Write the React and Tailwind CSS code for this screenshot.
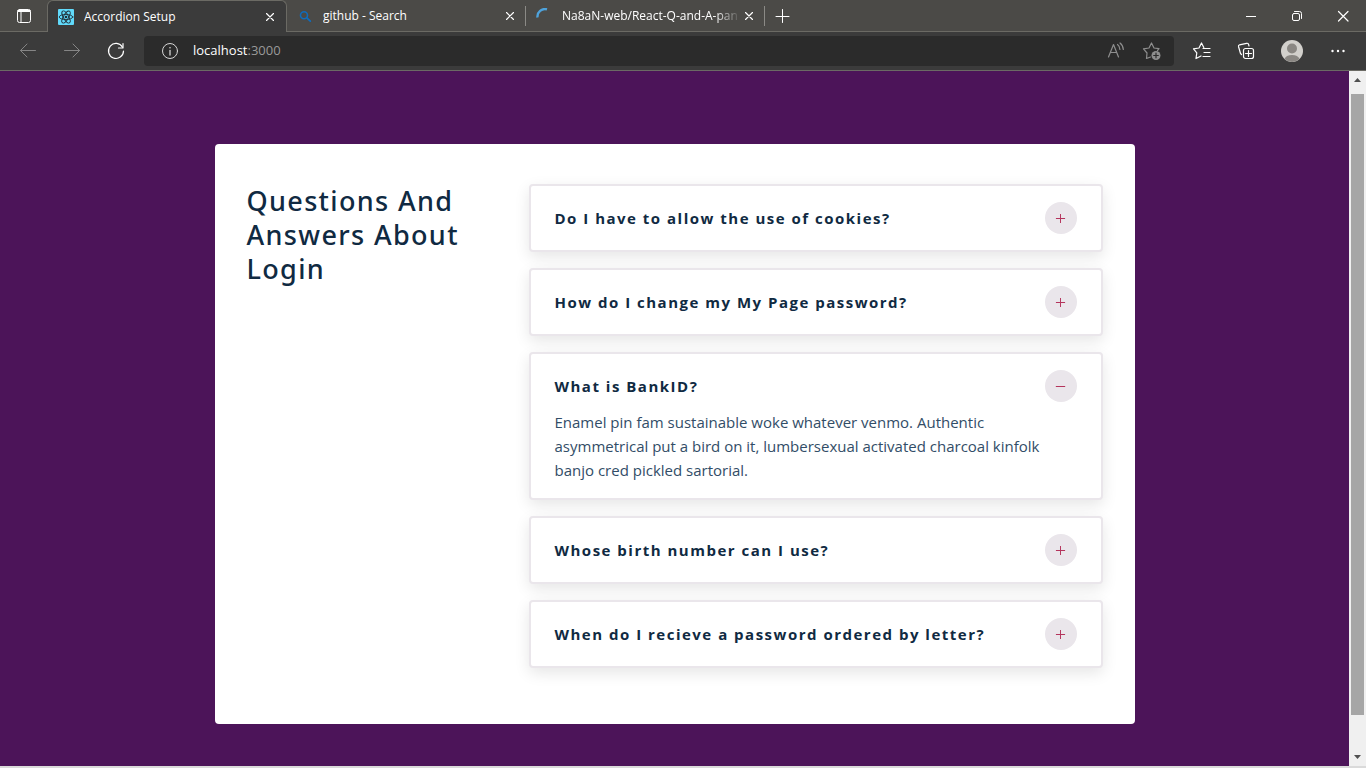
import { useState } from 'react';
import { AiOutlineMinus, AiOutlinePlus } from 'react-icons/ai';

const questions = [
  'Do I have to allow the use of cookies?',
  'How do I change my My Page password?',
  'What is BankID?',
  'Whose birth number can I use?',
  'When do I recieve a password ordered by letter?',
];

const answer =
  'Enamel pin fam sustainable woke whatever venmo. Authentic asymmetrical put a bird on it, lumbersexual activated charcoal kinfolk banjo cred pickled sartorial.';

function Icon({ size = 16, className = '', children }) {
  return (
    <svg
      width={size}
      height={size}
      viewBox={`0 0 ${size} ${size}`}
      fill="none"
      stroke="currentColor"
      strokeLinecap="round"
      strokeLinejoin="round"
      className={`shrink-0 ${className}`}
      aria-hidden="true"
    >
      {children}
    </svg>
  );
}

function CloseIcon() {
  return (
    <Icon size={8}>
      <path d="M.5.5l7 7M7.5.5l-7 7" strokeWidth="1.2" />
    </Icon>
  );
}

function ReactFavicon() {
  return (
    <Icon>
      <rect width="16" height="16" rx="1" fill="#61dafb" stroke="none" />
      <g stroke="#20303a" strokeWidth=".9">
        <ellipse cx="8" cy="8" rx="6.8" ry="2.6" />
        <ellipse cx="8" cy="8" rx="6.8" ry="2.6" transform="rotate(60 8 8)" />
        <ellipse cx="8" cy="8" rx="6.8" ry="2.6" transform="rotate(120 8 8)" />
      </g>
      <circle cx="8" cy="8" r="1.3" fill="#20303a" stroke="none" />
    </Icon>
  );
}

function SearchFavicon() {
  return (
    <Icon className="text-[#0f6cbd]">
      <circle cx="7" cy="7.2" r="3.500" strokeWidth="1.600" />
      <path d="M9.800 9.800l3.500 3.400" strokeWidth="1.700" />
    </Icon>
  );
}

function LoadingFavicon() {
  return (
    <Icon className="text-[#4ea3dc]">
      <path d="M1.500 9.500A7.500 7.500 0 0 1 11 1.400" strokeWidth="2.400" strokeLinecap="butt" />
    </Icon>
  );
}

function Tab({ icon, title, active, fade }) {
  return (
    <div
      className={
        active
          ? 'flex w-60 items-center rounded-t-md border-x border-t border-[#6b6a64] bg-[#3b3b3b] pr-3 pl-[10px]'
          : 'flex w-[239px] items-center border-t border-b border-t-transparent border-b-[#6b6a64] pl-[10px]'
      }
    >
      {icon}
      <a
        href="#tab"
        className={`ml-[10px] min-w-0 flex-1 overflow-hidden whitespace-nowrap ${
          fade ? '[mask-image:linear-gradient(to_right,black_85%,transparent)]' : ''
        }`}
      >
        {title}
      </a>
      <button
        type="button"
        aria-label={`Close ${title}`}
        className={`ml-1 flex items-center ${active ? '' : 'mr-[11px]'}`}
      >
        <CloseIcon />
      </button>
      {!active && <span className="h-5 w-px bg-[#8b8a86]" />}
    </div>
  );
}

function BarButton({ label, className = 'w-11', children }) {
  return (
    <button type="button" aria-label={label} className={`flex shrink-0 items-center justify-center ${className}`}>
      {children}
    </button>
  );
}

function TitleBar() {
  return (
    <div className="flex h-8 bg-[#4b4a47] text-xs text-white">
      <BarButton label="Tab actions" className="w-[47px] border-b border-[#6b6a64]">
        <Icon>
          <rect x="1.500" y="1.500" width="13" height="13" rx="2" />
          <path d="M2 3.500h12M2 2.500h12" />
          <path d="M5 4v10" />
        </Icon>
      </BarButton>
      <Tab active icon={<ReactFavicon />} title="Accordion Setup" />
      <Tab icon={<SearchFavicon />} title="github - Search" />
      <Tab icon={<LoadingFavicon />} title="Na8aN-web/React-Q-and-A-pan" fade />
      <div className="flex flex-1 border-b border-[#6b6a64]">
        <BarButton label="New tab" className="w-[34px]">
          <Icon>
            <path d="M8.500 1.500v13M2 8.500h13" />
          </Icon>
        </BarButton>
        <div className="ml-auto flex">
          <BarButton label="Minimize" className="w-[46px]">
            <Icon>
              <path d="M3 8.500h10" strokeLinecap="butt" />
            </Icon>
          </BarButton>
          <BarButton label="Restore" className="w-[46px]">
            <Icon>
              <rect x="3.500" y="5.500" width="7" height="7" rx="1.500" />
              <path d="M5.500 3.500h5a2 2 0 0 1 2 2v5" />
            </Icon>
          </BarButton>
          <BarButton label="Close" className="w-[46px]">
            <Icon>
              <path d="M3.500 3.500l9.500 9.500M13 3.500L3.500 13" strokeWidth="1.2" />
            </Icon>
          </BarButton>
        </div>
      </div>
    </div>
  );
}

function Toolbar() {
  return (
    <div className="flex h-[39px] border-b border-[#6b6a64] bg-[#3b3b3b] px-[6px] text-white">
      <BarButton label="Back">
        <Icon size={20} className="text-[#858585]">
          <path d="M2.500 9.500h15M9 3L2.500 9.500L9 16" />
        </Icon>
      </BarButton>
      <BarButton label="Forward">
        <Icon size={20} className="text-[#858585]">
          <path d="M2.500 9.500h15M11 3l6.500 6.500L11 16" />
        </Icon>
      </BarButton>
      <BarButton label="Refresh">
        <Icon size={20}>
          <path d="M16.500 6.200A7.500 7.500 0 1 0 17.500 10" strokeWidth="1.200" />
          <path d="M17 2.500v4.500h-4.500" strokeWidth="1.200" />
        </Icon>
      </BarButton>
      <div className="mx-[6px] my-1 flex min-w-0 flex-1 items-center rounded bg-[#2b2b2b] px-4">
        <Icon size={20} className="text-[#d6d6d6]">
          <circle cx="10" cy="10" r="7.500" />
          <path d="M10 9.500v4.500" strokeWidth="1.300" />
          <circle cx="10" cy="6.800" r=".8" fill="currentColor" stroke="none" />
        </Icon>
        <a href="#address" className="ml-[13px] flex-1 text-[13px]">
          localhost<span className="text-[#9a9a9a]">:3000</span>
        </a>
        <button type="button" aria-label="Read aloud" className="mr-4 text-[#8e8e8e]">
          <Icon size={20}>
            <path d="M2.500 16L7.500 3.500L12.500 16M4.300 11.500h6.400" strokeWidth="1.200" />
            <path d="M11.500 3.500q2.200 1.500 2.400 5M14 2q3 2.200 3.300 6.500" strokeWidth="1.200" />
          </Icon>
        </button>
        <button type="button" aria-label="Add to favorites" className="-mr-1 text-[#8e8e8e]">
          <Icon size={20}>
            <path d="M8.500 16L4.500 17.500L5 12L1.500 7.800L7 7L9.500 2L12 7l5 .7L15.500 9.500" strokeWidth="1.200" />
            <circle cx="14" cy="14.500" r="4.500" fill="currentColor" stroke="none" />
            <path d="M14 12.200v4.600M11.700 14.500h4.600" stroke="#2b2b2b" strokeWidth="1.200" />
          </Icon>
        </button>
      </div>
      <BarButton label="Favorites">
        <Icon size={20}>
          <path d="M9 15l-5 2.500.8-5.700L1.500 7.800l5.500-.8L9.500 2l2.300 4.500" strokeWidth="1.200" />
          <path d="M11 7.500h7M12 11.500h6M11 15.500h7" strokeWidth="1.200" />
        </Icon>
      </BarButton>
      <BarButton label="Collections">
        <Icon size={20}>
          <rect x="7.500" y="7.500" width="10" height="10" rx="2" strokeWidth="1.200" />
          <path d="M12.500 9.500v6M9.500 12.500h6" strokeWidth="1.200" />
          <path d="M5.500 13.500L4.500 12.500L2.500 5.500Q2.200 4.200 3.500 3.800L10.500 2.300q1.500-.3 2 .9l.5 1.800" strokeWidth="1.200" />
        </Icon>
      </BarButton>
      <BarButton label="Profile" className="w-12">
        <Icon size={22}>
          <circle cx="11" cy="11" r="11" fill="#d2d0cc" stroke="none" />
          <circle cx="11" cy="8.500" r="5" fill="#8a8783" stroke="none" />
          <path d="M3.500 19Q5 15 11 15t7.500 4Q15 22 11 22T3.500 19Z" fill="#8a8783" stroke="none" />
        </Icon>
      </BarButton>
      <BarButton label="Settings and more">
        <Icon size={20}>
          <g fill="currentColor" stroke="none">
            <circle cx="4.500" cy="10" r="1.200" />
            <circle cx="10" cy="10" r="1.200" />
            <circle cx="15.500" cy="10" r="1.200" />
          </g>
        </Icon>
      </BarButton>
    </div>
  );
}

function Question({ title, open, onToggle }) {
  return (
    <article className="rounded border-2 border-[#eae6eb] bg-white px-6 py-4 shadow-[0_5px_15px_rgba(0,0,0,0.1)]">
      <header className="flex items-center justify-between">
        <h4 className="text-[15px] leading-5 font-bold tracking-widest">{title}</h4>
        <button
          type="button"
          aria-label={`${open ? 'Hide' : 'Show'} answer: ${title}`}
          aria-expanded={open}
          onClick={onToggle}
          className="ml-4 flex size-8 shrink-0 items-center justify-center rounded-full bg-[#eae6eb] text-[#b4345c]"
        >
          {open ? <AiOutlineMinus size={13} /> : <AiOutlinePlus size={13} />}
        </button>
      </header>
      {open && <p className="mt-2 text-[15px] leading-6 text-[#324d67]">{answer}</p>}
    </article>
  );
}

function Scrollbar() {
  return (
    <div className="flex w-[17px] shrink-0 flex-col items-center bg-[#f0f0f0] text-[#505050]" aria-hidden="true">
      <svg width="17" height="23" viewBox="0 0 17 23" fill="currentColor">
        <path d="M5 11h7L8.500 7z" />
      </svg>
      <div className="mb-[34px] w-[13px] flex-1 bg-[#a6a6a6]" />
      <svg width="17" height="17" viewBox="0 0 17 17" fill="currentColor">
        <path d="M5 6h7L8.500 10z" />
      </svg>
    </div>
  );
}

export default function App() {
  const [openIndex, setOpenIndex] = useState(2);

  return (
    <div className="flex min-h-screen flex-col font-['Segoe_UI','Open_Sans',sans-serif]">
      <TitleBar />
      <Toolbar />
      <div className="flex flex-1 border-b-2 border-[#dadada] bg-[#4c1459]">
        <main className="min-w-0 flex-1 px-4 pt-[73px] pb-10 text-[#102a42]">
          <div className="mx-auto grid max-w-[920px] gap-8 rounded bg-white px-8 pt-10 pb-14 md:grid-cols-[250px_1fr]">
            <h3 className="font-['Noto_Sans',sans-serif] text-[27px] leading-[34px] font-medium tracking-wider">
              Questions And Answers About Login
            </h3>
            <section className="flex flex-col gap-4">
              {questions.map((title, index) => (
                <Question
                  key={title}
                  title={title}
                  open={openIndex === index}
                  onToggle={() => setOpenIndex(openIndex === index ? -1 : index)}
                />
              ))}
            </section>
          </div>
        </main>
        <Scrollbar />
      </div>
    </div>
  );
}
